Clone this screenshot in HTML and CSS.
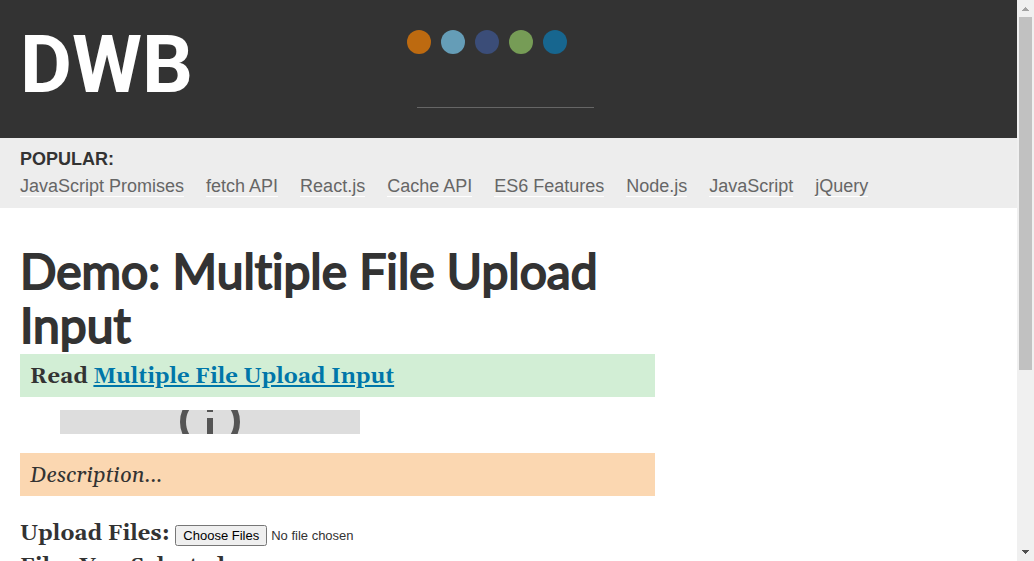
FILE: index.html
```html
<!DOCTYPE html>
<html lang="en-GB">
<head>
<meta charset="utf-8">
<title>Demo: Multiple File Upload Input</title>
<link rel="stylesheet" href="styles.css">
</head>
<body>
<div class="page">
  <header class="header">
    <a class="logo" href="#" aria-label="DWB home">DWB</a>
    <div class="header-tools">
      <nav class="social" aria-label="Social">
        <a class="dot dot-orange" href="#" aria-label="RSS"></a>
        <a class="dot dot-sky" href="#" aria-label="Twitter"></a>
        <a class="dot dot-navy" href="#" aria-label="Facebook"></a>
        <a class="dot dot-green" href="#" aria-label="GitHub"></a>
        <a class="dot dot-blue" href="#" aria-label="LinkedIn"></a>
      </nav>
      <input class="search" type="search" aria-label="Search">
    </div>
  </header>
  <nav class="popular" aria-label="Popular">
    <strong class="popular-title">POPULAR:</strong>
    <ul class="popular-list">
      <li><a href="#">JavaScript Promises</a></li>
      <li><a href="#">fetch API</a></li>
      <li><a href="#">React.js</a></li>
      <li><a href="#">Cache API</a></li>
      <li><a href="#">ES6 Features</a></li>
      <li><a href="#">Node.js</a></li>
      <li><a href="#">JavaScript</a></li>
      <li><a href="#">jQuery</a></li>
    </ul>
  </nav>
  <main class="content">
    <h1 class="title">Demo: Multiple File Upload Input</h1>
    <p class="note note-read">Read <a href="#">Multiple File Upload Input</a></p>
    <div class="promo">
      <svg width="60" height="60" viewBox="0 0 60 60" aria-hidden="true">
        <circle cx="30" cy="30" r="27" fill="none" stroke="#555" stroke-width="6"/>
        <path d="M27 14h6v6h-6zM27 26h6v20h-6z" fill="#555"/>
      </svg>
    </div>
    <p class="note note-description">Description...</p>
    <div class="upload">
      <label for="files">Upload Files:</label>
      <input id="files" type="file" multiple>
    </div>
    <p class="selected">Files You Selected:</p>
  </main>
</div>
<div class="scrollbar" aria-hidden="true">
  <svg width="17" height="17" viewBox="0 0 17 17" shape-rendering="crispEdges"><path d="M8 7h1v1h1v1h1v1h1v1H5v-1h1V9h1V8h1z" fill="#a3a3a3"/></svg>
  <div class="track"><div class="thumb"></div></div>
  <svg width="17" height="17" viewBox="0 0 17 17" shape-rendering="crispEdges"><path d="M5 6h7v1h-1v1h-1v1H9v1H8V9H7V8H6V7H5z" fill="#505050"/></svg>
</div>
</body>
</html>
```
FILE: styles.css
```css
* { box-sizing: border-box; }
body {
  margin: 0;
  height: 100vh;
  display: flex;
  overflow: hidden;
  color: #333;
  background: #fff;
  font-family: Georgia, Gelasio, "Liberation Serif", serif;
  font-size: 22px;
  line-height: 33px;
}
.page { flex: 1; min-width: 0; overflow: hidden; }
.header {
  display: grid;
  grid-template-columns: 2fr 3fr;
  padding: 30px 0;
  background: #333;
}
.logo {
  padding-left: 20px;
  color: #fff;
  font: bold 80px/70px Roboto, sans-serif;
  text-decoration: none;
}
.header-tools {
  display: flex;
  flex-direction: column;
  align-items: flex-start;
  justify-content: space-between;
  height: 78px;
}
.social { display: flex; gap: 10px; }
.dot { width: 24px; height: 24px; border-radius: 50%; }
.dot-orange { background: #bd6a10; }
.dot-sky { background: #659db7; }
.dot-navy { background: #3b4d78; }
.dot-green { background: #769c56; }
.dot-blue { background: #17668f; }
.search {
  width: 177px;
  height: 32px;
  margin-left: 10px;
  padding: 0;
  color: #fff;
  background: transparent;
  border: 0;
  border-bottom: 1px solid #666;
  appearance: none;
}
.popular {
  padding: 8px 20px;
  background: #ededed;
  font: 18px/27px "Liberation Sans", Arial, sans-serif;
}
.popular-title { display: block; }
.popular-list {
  display: flex;
  flex-wrap: wrap;
  gap: 0 22px;
  margin: 0;
  padding: 0;
  list-style: none;
}
.popular a {
  color: #666;
  border-bottom: 1px solid #fff;
  text-decoration: none;
}
.content {
  max-width: 675px;
  padding: 36px 20px;
}
.title {
  margin: 0;
  padding-bottom: 2px;
  font: 48px/54px Lato, Carlito, sans-serif;
  font-variant-ligatures: none;
  -webkit-text-stroke: 2px #333;
}
.note { margin: 0; padding: 7px 10px 3px; }
.note-read { background: #d2eed5; font-weight: bold; }
.note a { color: #0076a9; }
.note-description { background: #fbd7b1; font-style: italic; }
.promo {
  display: grid;
  place-content: center;
  width: 300px;
  height: 24px;
  margin: 13px 40px 19px;
  overflow: hidden;
  background: #ddd;
}
.upload {
  margin-top: 22px;
  font-weight: bold;
}
.upload input {
  color: #333;
  font: 13px "Liberation Sans", Arial, sans-serif;
}
.selected { margin: 0; font-weight: bold; }
.scrollbar {
  display: flex;
  flex-direction: column;
  width: 17px;
  background: #f0f0f0;
}
.track { flex: 1; padding: 0 2px; }
.thumb { height: 67%; background: #c1c1c1; }
```
